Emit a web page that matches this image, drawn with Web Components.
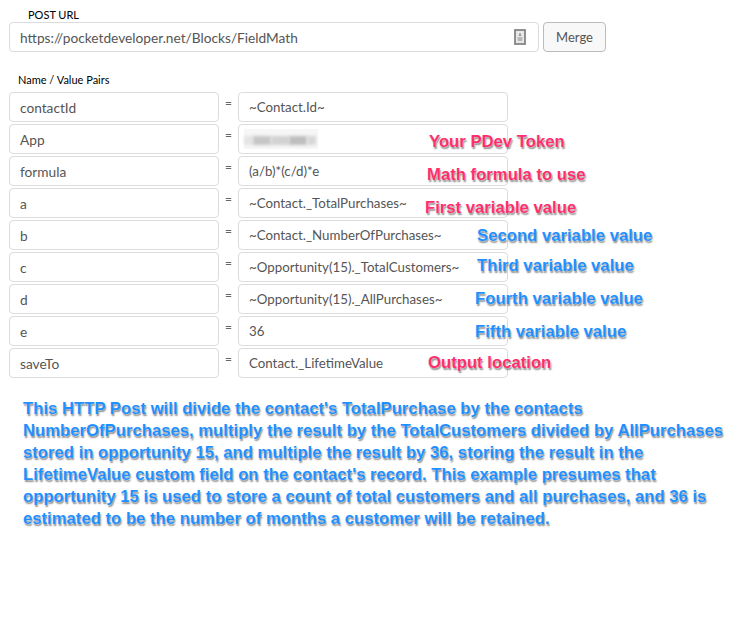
<!DOCTYPE html>
<html>
<head>
<meta charset="utf-8">
<title>POST URL</title>
<style>
  html, body { margin: 0; background: #fff; }
  body { width: 741px; height: 620px; overflow: hidden; font-family: "Lato", sans-serif; }
</style>
</head>
<body>
<post-form>
  <url-bar value="https://pocketdeveloper.net/Blocks/FieldMath"></url-bar>
  <pair-row name="contactId" value="~Contact.Id~"></pair-row>
  <pair-row name="App" blurred>
    <note-label color="pink" left="420" top="9">Your PDev Token</note-label>
  </pair-row>
  <pair-row name="formula" value="(a/b)*(c/d)*e">
    <note-label color="pink" left="418" top="10">Math formula to use</note-label>
  </pair-row>
  <pair-row name="a" value="~Contact._TotalPurchases~">
    <note-label color="pink" left="416" top="11">First variable value</note-label>
  </pair-row>
  <pair-row name="b" value="~Contact._NumberOfPurchases~">
    <note-label color="blue" left="468" top="7">Second variable value</note-label>
  </pair-row>
  <pair-row name="c" value="~Opportunity(15)._TotalCustomers~">
    <note-label color="blue" left="468" top="5">Third variable value</note-label>
  </pair-row>
  <pair-row name="d" value="~Opportunity(15)._AllPurchases~">
    <note-label color="blue" left="466" top="6">Fourth variable value</note-label>
  </pair-row>
  <pair-row name="e" value="36">
    <note-label color="blue" left="466" top="7">Fifth variable value</note-label>
  </pair-row>
  <pair-row name="saveTo" value="Contact._LifetimeValue">
    <note-label color="pink" left="419" top="6">Output location</note-label>
  </pair-row>
  <note-block slot="footer">This HTTP Post will divide the contact's TotalPurchase by the contacts NumberOfPurchases, multiply the result by the TotalCustomers divided by AllPurchases stored in opportunity 15, and multiple the result by 36, storing the result in the LifetimeValue custom field on the contact's record. This example presumes that opportunity 15 is used to store a count of total customers and all purchases, and 36 is estimated to be the number of months a customer will be retained.</note-block>
</post-form>

<script>
// Outer form, holds the two headings and the rows
class PostForm extends HTMLElement {
  constructor() {
    super();
    this.attachShadow({ mode: 'open' });
    this.shadowRoot.innerHTML = `
      <style>
        :host { display: block; padding: 8px 0 0 9px; color: #000; }
        .heading { font-size: 11px; line-height: 14px; }
        .url-title { margin-left: 19px; }
        .pairs-title { margin: 21px 0 5px 9px; }
        .rows { display: flex; flex-direction: column; gap: 2px; }
        .footer { margin-top: 20px; }
      </style>
      <div class="heading url-title">POST URL</div>
      <slot name="url"></slot>
      <div class="heading pairs-title">Name / Value Pairs</div>
      <div class="rows"><slot></slot></div>
      <div class="footer"><slot name="footer"></slot></div>
    `;
  }

  connectedCallback() {
    const bar = this.querySelector('url-bar');
    if (bar) bar.slot = 'url';
  }
}

// URL input with the merge button beside it
class UrlBar extends HTMLElement {
  constructor() {
    super();
    this.attachShadow({ mode: 'open' });
    this.shadowRoot.innerHTML = `
      <style>
        :host { display: flex; gap: 4px; height: 30px; }
        .field {
          box-sizing: border-box; width: 530px; height: 30px;
          display: flex; align-items: center; justify-content: space-between;
          padding: 0 12px 0 10px;
          border: 1px solid #dcdcdc; border-radius: 4px; background: #fff;
          color: #555; font-size: 13.7px;
        }
        svg { display: block; }
        button {
          box-sizing: border-box; width: 63px; height: 30px; padding: 0;
          border: 1px solid #bcbcbc; border-radius: 4px; background: #f8f8f8;
          color: #555; font: 13px "Lato", sans-serif;
        }
      </style>
      <div class="field">
        <span class="url"></span>
        <svg width="12" height="16" viewBox="0 0 12 16">
          <rect x="1" y="1" width="10" height="14" fill="#e8e8e8" stroke="#858585" stroke-width="1.8"/>
          <path d="M6 3.6l1.4 3.2h-2.8z" fill="#858585"/>
          <path d="M3.6 9h4.8M3.6 11h4.8" stroke="#a8a8a8" stroke-width="1.3"/>
        </svg>
      </div>
      <button>Merge</button>
    `;
  }

  connectedCallback() {
    this.shadowRoot.querySelector('.url').textContent = this.getAttribute('value');
  }
}

// One name = value row, annotations come through the slot
class PairRow extends HTMLElement {
  constructor() {
    super();
    this.attachShadow({ mode: 'open' });
    this.shadowRoot.innerHTML = `
      <style>
        :host { display: block; position: relative; height: 30px; }
        .row { display: flex; height: 30px; }
        .box {
          box-sizing: border-box; height: 30px; padding: 0 10px;
          display: flex; align-items: center;
          border: 1px solid #dcdcdc; border-radius: 4px; background: #fff;
          color: #555; white-space: nowrap; overflow: hidden;
        }
        .name { width: 210px; font-size: 13.7px; }
        .value { width: 270px; font-size: 13.3px; }
        .eq { width: 19px; padding-top: 3px; text-align: center; color: #666; font-size: 12px; line-height: 16px; }
        .smudge { display: flex; align-items: center; width: 74px; height: 20px; margin: 0 0 0 -5px; background: #f6f6f6; }
        .smudge i { display: block; height: 9px; margin-top: 3px; filter: blur(1.5px); }
      </style>
      <div class="row">
        <div class="box name"></div>
        <div class="eq">=</div>
        <div class="box value"></div>
      </div>
      <slot></slot>
    `;
  }

  connectedCallback() {
    const root = this.shadowRoot;
    root.querySelector('.name').textContent = this.getAttribute('name');
    const value = root.querySelector('.value');
    if (this.hasAttribute('blurred')) {
      value.innerHTML = `<div class="smudge"><i style="width:9px;background:#e4e4e4"></i><i style="width:18px;background:#c6c6c6"></i><i style="width:18px;background:#d2d2d2"></i><i style="width:18px;background:#bebebe"></i><i style="width:9px;background:#d8d8d8"></i></div>`;
    } else {
      value.textContent = this.getAttribute('value');
    }
  }
}

// Coloured note drawn over a row
class NoteLabel extends HTMLElement {
  constructor() {
    super();
    this.attachShadow({ mode: 'open' });
    this.shadowRoot.innerHTML = `
      <style>
        :host {
          display: block; position: absolute; white-space: nowrap;
          font: bold 16.7px/18px "Liberation Sans", sans-serif;
          text-shadow: 0 0 1px #fff, 1px 2px 1.5px rgba(0, 0, 0, .45);
        }
        :host([color="pink"]) { color: #ff2d6b; }
        :host([color="blue"]) { color: #1e8fff; }
      </style>
      <slot></slot>
    `;
  }

  connectedCallback() {
    this.style.left = this.getAttribute('left') + 'px';
    this.style.top = this.getAttribute('top') + 'px';
  }
}

// Long blue explanation under the rows
class NoteBlock extends HTMLElement {
  constructor() {
    super();
    this.attachShadow({ mode: 'open' });
    this.shadowRoot.innerHTML = `
      <style>
        :host {
          display: block; width: 704px; margin-left: 14px;
          color: #1e8fff;
          font: bold 16.7px/22px "Liberation Sans", sans-serif;
          text-shadow: 0 0 1px #fff, 1px 2px 1.5px rgba(0, 0, 0, .45);
        }
      </style>
      <slot></slot>
    `;
  }
}

customElements.define('post-form', PostForm);
customElements.define('url-bar', UrlBar);
customElements.define('pair-row', PairRow);
customElements.define('note-label', NoteLabel);
customElements.define('note-block', NoteBlock);
</script>
</body>
</html>
